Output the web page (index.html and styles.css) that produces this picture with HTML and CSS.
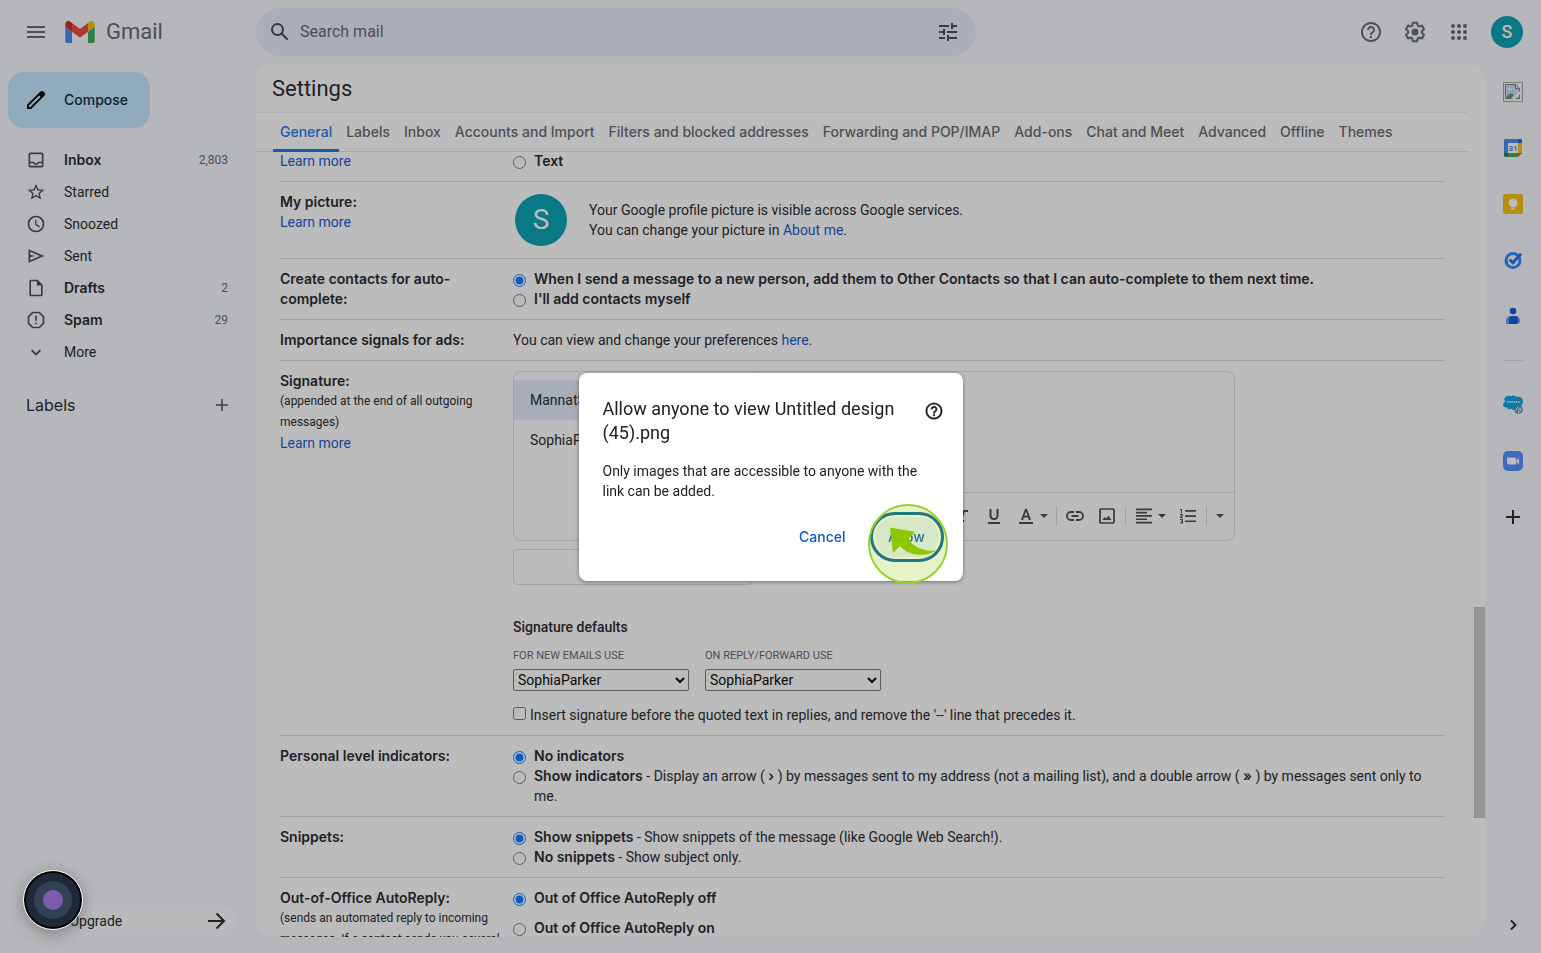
FILE: index.html
```html
<!DOCTYPE html>
<html lang="en">
<head>
<meta charset="utf-8">
<title>Settings - Gmail</title>
<link rel="stylesheet" href="styles.css">
</head>
<body>
<div class="app">
  <header class="topbar">
    <div class="brand">
      <button class="icon-btn" aria-label="Main menu"><svg viewBox="0 0 24 24" width="24" height="24"><path d="M3 18h18v-2H3v2zm0-5h18v-2H3v2zm0-7v2h18V6H3z"/></svg></button>
      <svg class="logo" viewBox="52 42 88 66" width="30" height="22"><path fill="#4285f4" d="M58 108h14V74L52 59v43c0 3.320 2.690 6 6 6"/><path fill="#34a853" d="M120 108h14c3.320 0 6-2.690 6-6V59l-20 15"/><path fill="#fbbc04" d="M120 48v26l20-15v-8c0-7.420-8.470-11.650-14.400-7.200"/><path fill="#ea4335" d="M72 74V48l24 18 24-18v26L96 92"/><path fill="#c5221f" d="M52 51v8l20 15V48l-5.600-4.200c-5.940-4.450-14.400-.22-14.400 7.200"/></svg>
      <span class="brand-name">Gmail</span>
    </div>
    <form class="search">
      <svg viewBox="0 0 24 24" width="24" height="24"><path d="M20.490 19l-5.730-5.730C15.530 12.200 16 10.910 16 9.500A6.500 6.500 0 1 0 9.500 16c1.410 0 2.700-.47 3.770-1.240L19 20.490 20.490 19zM5 9.500C5 7.010 7.010 5 9.500 5S14 7.010 14 9.500 11.990 14 9.500 14 5 11.990 5 9.500z"/></svg>
      <input type="text" placeholder="Search mail" aria-label="Search mail">
      <button type="button" class="icon-btn" aria-label="Search options"><svg viewBox="0 0 24 24" width="24" height="24"><path d="M3 17v2h6v-2H3zM3 5v2h10V5H3zm10 16v-2h8v-2h-8v-2h-2v6h2zM7 9v2H3v2h4v2h2V9H7zm14 4v-2H11v2h10zm-6-4h2V7h4V5h-4V3h-2v6z"/></svg></button>
    </form>
    <div class="top-actions">
      <button class="icon-btn" aria-label="Support"><svg viewBox="0 0 24 24" width="24" height="24"><path d="M11 18h2v-2h-2v2zm1-16C6.480 2 2 6.480 2 12s4.480 10 10 10 10-4.480 10-10S17.520 2 12 2zm0 18c-4.410 0-8-3.590-8-8s3.590-8 8-8 8 3.590 8 8-3.590 8-8 8zm0-14c-2.210 0-4 1.790-4 4h2c0-1.100.9-2 2-2s2 .9 2 2c0 2-3 1.750-3 5h2c0-2.250 3-2.500 3-5 0-2.210-1.790-4-4-4z"/></svg></button>
      <button class="icon-btn" aria-label="Settings"><svg viewBox="0 0 24 24" width="24" height="24"><path d="M13.850 22.250h-3.700c-.74 0-1.360-.54-1.450-1.270l-.27-1.890c-.27-.14-.53-.29-.79-.46l-1.800.72c-.7.26-1.470-.03-1.810-.65L2.200 15.530c-.35-.66-.2-1.440.36-1.880l1.530-1.190c-.01-.15-.02-.3-.02-.46 0-.15.010-.31.020-.46l-1.520-1.190c-.59-.45-.74-1.260-.37-1.880l1.850-3.190c.34-.62 1.110-.9 1.790-.63l1.810.73c.26-.17.52-.32.780-.46l.27-1.910c.09-.7.710-1.250 1.440-1.250h3.700c.74 0 1.360.54 1.450 1.270l.27 1.890c.27.14.53.29.79.46l1.800-.72c.71-.26 1.480.03 1.820.65l1.840 3.180c.36.66.2 1.440-.36 1.880l-1.520 1.190c.01.15.020.3.020.460s-.01.31-.02.46l1.520 1.190c.56.45.72 1.230.37 1.860l-1.860 3.220c-.34.62-1.110.9-1.800.63l-1.800-.72c-.26.17-.52.32-.78.460l-.27 1.910c-.1.680-.72 1.220-1.460 1.220zm-3.230-2h2.760l.37-2.550.53-.22c.44-.18.88-.44 1.340-.78l.45-.34 2.380.96 1.380-2.400-2.030-1.580.07-.56c.03-.26.060-.51.060-.78s-.03-.53-.06-.78l-.07-.56 2.030-1.580-1.390-2.400-2.390.96-.45-.35c-.42-.32-.87-.58-1.330-.77l-.52-.22-.37-2.550h-2.760l-.37 2.550-.53.210c-.44.190-.88.440-1.340.79l-.45.330-2.380-.95-1.390 2.390 2.030 1.580-.07.56a7 7 0 0 0-.06.79c0 .26.020.53.060.78l.07.56-2.030 1.580 1.380 2.400 2.390-.96.45.35c.43.33.86.58 1.330.77l.53.220z"/><circle cx="12" cy="12" r="3.500"/></svg></button>
      <button class="icon-btn" aria-label="Google apps"><svg viewBox="0 0 24 24" width="24" height="24"><path d="M6 8a2 2 0 1 0 0-4 2 2 0 0 0 0 4zm6 12a2 2 0 1 0 0-4 2 2 0 0 0 0 4zm-6 0a2 2 0 1 0 0-4 2 2 0 0 0 0 4zm0-6a2 2 0 1 0 0-4 2 2 0 0 0 0 4zm6 0a2 2 0 1 0 0-4 2 2 0 0 0 0 4zm6-6a2 2 0 1 0 0-4 2 2 0 0 0 0 4zm-6 0a2 2 0 1 0 0-4 2 2 0 0 0 0 4zm6 6a2 2 0 1 0 0-4 2 2 0 0 0 0 4zm0 6a2 2 0 1 0 0-4 2 2 0 0 0 0 4z"/></svg></button>
      <button class="avatar avatar-small" aria-label="Account">S</button>
    </div>
  </header>

  <aside class="sidebar">
    <button class="compose"><svg viewBox="0 0 24 24" width="24" height="24"><path fill-rule="evenodd" d="M3 21v-4.200L15.900 3.900c1.200-1.200 3-1.200 4.200 0s1.200 3 0 4.200L7.200 21H3zm2-2h1.400L16.500 8.900l-1.400-1.400L5 17.600V19z"/></svg>Compose</button>
    <nav class="nav">
      <a class="nav-item strong" href="#"><svg viewBox="0 0 24 24" width="20" height="20"><path d="M19 3H5a2 2 0 0 0-2 2v14a2 2 0 0 0 2 2h14a2 2 0 0 0 2-2V5a2 2 0 0 0-2-2zm0 16H5v-3h3.560c.69 1.190 1.970 2 3.450 2s2.750-.81 3.450-2H19v3zm0-5h-4.990c0 1.100-.9 2-2 2s-2-.9-2-2H5V5h14v9z"/></svg><span>Inbox</span><span class="count">2,803</span></a>
      <a class="nav-item" href="#"><svg viewBox="0 0 24 24" width="20" height="20"><path d="M22 9.240l-7.190-.62L12 2 9.190 8.630 2 9.240l5.460 4.730L5.820 21 12 17.270 18.180 21l-1.630-7.030L22 9.240zM12 15.400l-3.760 2.270 1-4.280-3.320-2.880 4.380-.38L12 6.100l1.710 4.040 4.380.38-3.320 2.880 1 4.280L12 15.400z"/></svg><span>Starred</span></a>
      <a class="nav-item" href="#"><svg viewBox="0 0 24 24" width="20" height="20"><path d="M12 2a10 10 0 1 0 0 20 10 10 0 0 0 0-20zm0 18a8 8 0 1 1 0-16 8 8 0 0 1 0 16zm.5-13H11v6l4.800 3.200 1-1.600-4.300-2.600V7z"/></svg><span>Snoozed</span></a>
      <a class="nav-item" href="#"><svg viewBox="0 0 24 24" width="20" height="20"><path d="M3 20V4l19 8-19 8zm2-3l11.850-5L5 7v3.500l6 1.500-6 1.500V17z"/></svg><span>Sent</span></a>
      <a class="nav-item strong" href="#"><svg viewBox="0 0 24 24" width="20" height="20"><path d="M14 2H6a2 2 0 0 0-2 2v16c0 1.100.89 2 1.990 2H18a2 2 0 0 0 2-2V8l-6-6zM6 20V4h7v5h5v11H6z"/></svg><span>Drafts</span><span class="count">2</span></a>
      <a class="nav-item strong" href="#"><svg viewBox="0 0 24 24" width="20" height="20"><path d="M8 3h8l5 5v8l-5 5H8l-5-5V8l5-5z" fill="none" stroke="currentColor" stroke-width="2" stroke-linejoin="round"/><path d="M11 7h2v6h-2zM11 15h2v2h-2z"/></svg><span>Spam</span><span class="count">29</span></a>
      <a class="nav-item" href="#"><svg viewBox="0 0 24 24" width="20" height="20"><path d="M12 16.400l-6-6L7.400 9l4.600 4.600L16.600 9l1.400 1.400z"/></svg><span>More</span></a>
    </nav>
    <div class="labels-head"><h2>Labels</h2><button class="icon-btn" aria-label="Create new label"><svg viewBox="0 0 20 20" width="20" height="20"><path d="M16 9.250v1.500h-5.250V16h-1.500v-5.250H4v-1.500h5.250V4h1.500v5.250z"/></svg></button></div>
    <a class="upgrade" href="#"><span>Upgrade</span><svg viewBox="0 0 24 24" width="24" height="24"><path d="M4 12h15M12.500 4.500L20 12l-7.500 7.500" fill="none" stroke="currentColor" stroke-width="2"/></svg></a>
  </aside>

  <main class="panel">
    <h1 class="title">Settings</h1>
    <nav class="tabs">
      <a class="tab active" href="#">General</a><a class="tab" href="#">Labels</a><a class="tab" href="#">Inbox</a><a class="tab" href="#">Accounts and Import</a><a class="tab" href="#">Filters and blocked addresses</a><a class="tab" href="#">Forwarding and POP/IMAP</a><a class="tab" href="#">Add-ons</a><a class="tab" href="#">Chat and Meet</a><a class="tab" href="#">Advanced</a><a class="tab" href="#">Offline</a><a class="tab" href="#">Themes</a>
    </nav>
    <div class="scroll">
      <section class="row row-first">
        <div class="name"><a href="#">Learn more</a></div>
        <div class="value"><label class="opt"><input type="radio" name="buttons"><b>Text</b></label></div>
      </section>
      <section class="row">
        <div class="name"><b>My picture:</b><a href="#">Learn more</a></div>
        <div class="value picture"><span class="avatar avatar-large">S</span><p>Your Google profile picture is visible across Google services.<br>You can change your picture in <a href="#">About me</a>.</p></div>
      </section>
      <section class="row">
        <div class="name"><b>Create contacts for auto-complete:</b></div>
        <div class="value">
          <label class="opt"><input type="radio" name="contacts" checked><b>When I send a message to a new person, add them to Other Contacts so that I can auto-complete to them next time.</b></label>
          <label class="opt"><input type="radio" name="contacts"><b>I'll add contacts myself</b></label>
        </div>
      </section>
      <section class="row">
        <div class="name"><b>Importance signals for ads:</b></div>
        <div class="value">You can view and change your preferences <a href="#">here</a>.</div>
      </section>
      <section class="row">
        <div class="name"><b>Signature:</b><small>(appended at the end of all outgoing messages)</small><a href="#">Learn more</a></div>
        <div class="value">
          <div class="editor">
            <div class="sig-list"><button class="sig selected">MannatS</button><button class="sig">SophiaParker</button></div>
            <div class="sig-body">
              <div class="toolbar">
                <button aria-label="Italic"><svg viewBox="0 0 20 20" width="20" height="20"><path d="M8 4v2h2.600l-2.800 8H5v2h7v-2h-2l2.800-8H16V4z"/></svg></button>
                <button aria-label="Underline"><svg viewBox="0 0 20 20" width="20" height="20"><path d="M10 14c2.800 0 4.500-1.800 4.500-4.500V3h-2v6.500c0 1.500-1 2.600-2.500 2.600s-2.500-1.100-2.500-2.600V3h-2v6.500C5.500 12.200 7.200 14 10 14zM4 16v2h12v-2z"/></svg></button>
                <button class="wide" aria-label="Text colour"><svg viewBox="0 0 20 20" width="20" height="20"><path fill-rule="evenodd" d="M9 3L5 14h2l.9-2.500h4.200L13 14h2L11 3H9zm-.5 6.800L10 5.500l1.500 4.300h-3zM3 16h14v2H3z"/></svg><svg viewBox="0 0 10 10" width="10" height="10"><path d="M1 3h8L5 7z"/></svg></button>
                <i></i>
                <button aria-label="Link"><svg viewBox="0 0 20 20" width="20" height="20"><path d="M9 6H6a4 4 0 0 0 0 8h3M11 6h3a4 4 0 0 1 0 8h-3M6.500 10h7" fill="none" stroke="currentColor" stroke-width="1.800"/></svg></button>
                <button aria-label="Insert image"><svg viewBox="0 0 20 20" width="20" height="20"><rect x="3" y="3" width="14" height="14" rx="1" fill="none" stroke="currentColor" stroke-width="1.700"/><path d="M5.500 14l2.200-3 1.500 1.800 2.200-3 3.100 4.200z"/></svg></button>
                <i></i>
                <button class="wide" aria-label="Align"><svg viewBox="0 0 20 20" width="20" height="20"><path d="M2 2.500h16v1.700H2zm0 3.300h11v1.700H2zm0 3.300h16v1.700H2zm0 3.300h11v1.700H2zm0 3.300h16v1.700H2z"/></svg><svg viewBox="0 0 10 10" width="10" height="10"><path d="M1 3h8L5 7z"/></svg></button>
                <button aria-label="Numbered list"><svg viewBox="0 0 20 20" width="20" height="20"><path d="M7 4h11v1.700H7zm0 5.200h11v1.700H7zm0 5.200h11v1.700H7zM2 3h2v4H3V4H2zM2 8h3v1.200L3.500 11H5v1H2v-1l1.800-2H2zM2 13h3v4.500H2v-1h2v-.8H3v-1h1V14H2z"/></svg></button>
                <i></i>
                <button class="slim" aria-label="More"><svg viewBox="0 0 10 10" width="10" height="10"><path d="M1 3h8L5 7z"/></svg></button>
              </div>
            </div>
          </div>
          <input class="new-sig" type="text" aria-label="Signature name">
          <h3>Signature defaults</h3>
          <div class="defaults">
            <label>FOR NEW EMAILS USE<select><option>SophiaParker</option></select></label>
            <label>ON REPLY/FORWARD USE<select><option>SophiaParker</option></select></label>
          </div>
          <label class="check"><input type="checkbox"><span>Insert signature before the quoted text in replies, and remove the '--' line that precedes it.</span></label>
        </div>
      </section>
      <section class="row">
        <div class="name"><b>Personal level indicators:</b></div>
        <div class="value">
          <label class="opt"><input type="radio" name="indicators" checked><b>No indicators</b></label>
          <label class="opt"><input type="radio" name="indicators"><span><b>Show indicators</b> - Display an arrow ( <b>›</b> ) by messages sent to my address (not a mailing list), and a double arrow ( <b>»</b> ) by messages sent only to me.</span></label>
        </div>
      </section>
      <section class="row">
        <div class="name"><b>Snippets:</b></div>
        <div class="value">
          <label class="opt"><input type="radio" name="snippets" checked><span><b>Show snippets</b> - Show snippets of the message (like Google Web Search!).</span></label>
          <label class="opt"><input type="radio" name="snippets"><span><b>No snippets</b> - Show subject only.</span></label>
        </div>
      </section>
      <section class="row">
        <div class="name"><b>Out-of-Office AutoReply:</b><small>(sends an automated reply to incoming messages. If a contact sends you several</small></div>
        <div class="value spaced">
          <label class="opt"><input type="radio" name="ooo" checked><b>Out of Office AutoReply off</b></label>
          <label class="opt"><input type="radio" name="ooo"><b>Out of Office AutoReply on</b></label>
        </div>
      </section>
    </div>
    <div class="thumb"></div>
  </main>

  <aside class="rail">
    <a href="#" aria-label="Add-on"><svg viewBox="0 0 20 20" width="20" height="20"><path fill="none" stroke="#a3a3a3" d="M.5.500h19v19H.5z"/><path fill="#c6d9f5" stroke="#7c7c7c" d="M2.500 2.500h10l4 4v10h-14z"/><path fill="#fff" d="M4 8c0-2 2-2 2.500-1C8 5.500 9 7 9 8z"/><path fill="#48a537" d="M3 16c2-4 5-6 8-3l-3 3z"/><path fill="#fff" stroke="#7c7c7c" d="M12.500 2.500v4h4z"/><path fill="#fff" d="M9 17l8-8v3l-5 5z"/></svg></a>
    <a href="#" aria-label="Calendar"><svg viewBox="0 0 20 20" width="20" height="20"><path fill="#4285f4" d="M2 1h13v4H5v10H1V2z"/><path fill="#1967d2" d="M15 1h3l1 1v3h-4z"/><path fill="#fff" d="M5 5h10v10H5z"/><path fill="#fbbc04" d="M15 5h4v10h-4z"/><path fill="#188038" d="M1 15h4v4H2l-1-1z"/><path fill="#34a853" d="M5 15h10v4H5z"/><path fill="#ea4335" d="M15 15h4l-4 4z"/><text x="10" y="13" text-anchor="middle" class="cal">31</text></svg></a>
    <a href="#" aria-label="Keep"><svg viewBox="0 0 20 20" width="20" height="20"><rect x="0" y="0" width="20" height="20" rx="2" fill="#fbbc04"/><path fill="#fff" d="M10 4.500a4.300 4.300 0 0 0-2.200 8v.8h4.400v-.8a4.300 4.300 0 0 0-2.200-8zM8 14.200h4v1.300H8z"/></svg></a>
    <a href="#" aria-label="Tasks"><svg viewBox="0 0 20 20" width="20" height="20"><circle cx="10" cy="10.500" r="7" fill="none" stroke="#2684fc" stroke-width="3"/><path d="M6.500 9.500l3.500 3.300L18 3.800" fill="none" stroke="#1a6fe0" stroke-width="3"/></svg></a>
    <a href="#" aria-label="Contacts"><svg viewBox="0 0 20 20" width="20" height="20"><circle cx="10" cy="5" r="3.300" fill="#0b57d0"/><path fill="#6c93f5" d="M3 18v-3.500A4.500 4.500 0 0 1 7.500 10h5a4.500 4.500 0 0 1 4.500 4.500c0 2-1 3.500-3 3.500z"/><path fill="#0b57d0" d="M6 18v-4a4 4 0 0 1 4-4h2a3 3 0 0 1 3 3v2a3 3 0 0 1-3 3z"/></svg></a>
    <hr>
    <a href="#" aria-label="Salesforce"><svg viewBox="0 0 20 20" width="20" height="20"><path fill="#f6f7f8" d="M0 0h20v19H0z"/><path fill="#00a1e0" d="M2.500 7C-1 3 4-1 8 1.500c2-2 4.500-1 5.500.5 3-1 6 .5 6.500 4 0 3-1.500 5-3.500 5.500L12 15c-2 0-2.500-.5-3.500-1.500-2 1.500-4 .5-4.500-1-2 .5-4-1-4-2.500s1-2.500 2.500-3z"/><path d="M4 7h13" stroke="#fff" stroke-width="2" stroke-dasharray="1.500 .7" opacity=".7"/><circle cx="15.500" cy="14.500" r="4.300" fill="#3a88bd"/><path d="M12.500 16l2.500-4.500M15 17.500c2-.5 3-2 3-3.500 0-1.500-2-1.500-2 0l-.5 3.500" fill="none" stroke="#fff"/></svg></a>
    <a href="#" aria-label="Zoom"><svg viewBox="0 0 20 20" width="20" height="20"><rect width="20" height="20" rx="5" fill="#4a8cff"/><path fill="#fff" d="M4 6.500h7a2 2 0 0 1 2 2v5H6a2 2 0 0 1-2-2zM13.500 9.200L16 7v6.500l-2.500-2z"/></svg></a>
    <a href="#" aria-label="Get add-ons"><svg viewBox="0 0 20 20" width="20" height="20"><path d="M10 3v14M3 10h14" stroke="currentColor" stroke-width="2"/></svg></a>
    <button class="icon-btn rail-toggle" aria-label="Hide side panel"><svg viewBox="0 0 20 20" width="20" height="20"><path d="M8 5.500l4.500 4.500L8 14.500" fill="none" stroke="currentColor" stroke-width="1.800"/></svg></button>
  </aside>
</div>

<div class="scrim">
  <div class="dialog" role="dialog" aria-labelledby="dialog-title">
    <div class="dialog-head">
      <h2 id="dialog-title">Allow anyone to view Untitled design (45).png</h2>
      <button class="icon-btn" aria-label="Help"><svg viewBox="0 0 24 24" width="20" height="20"><path stroke="currentColor" stroke-width=".3" d="M11 18h2v-2h-2v2zm1-16C6.480 2 2 6.480 2 12s4.480 10 10 10 10-4.480 10-10S17.520 2 12 2zm0 18c-4.410 0-8-3.590-8-8s3.590-8 8-8 8 3.590 8 8-3.590 8-8 8zm0-14c-2.210 0-4 1.790-4 4h2c0-1.100.9-2 2-2s2 .9 2 2c0 2-3 1.750-3 5h2c0-2.250 3-2.500 3-5 0-2.210-1.790-4-4-4z"/></svg></button>
    </div>
    <p>Only images that are accessible to anyone with the link can be added.</p>
    <div class="dialog-actions">
      <button class="text-btn">Cancel</button>
      <button class="text-btn focused">Allow</button>
      <svg class="pointer" viewBox="0 0 80 80" width="80" height="80"><circle cx="40" cy="40" r="39" fill="#8cc800" fill-opacity=".22" stroke="#96d22d" stroke-width="2"/><path fill="#8cc800" d="M22 23.500L47 28l-6.500 7c5 8 13 12.500 27.500 11.500-7 5.500-26 7.500-36-4.500L25 49z"/></svg>
    </div>
  </div>
</div>
<button class="recorder" aria-label="Recorder"><span></span></button>
</body>
</html>
```
FILE: styles.css
```css
* { box-sizing: border-box; }
body {
  margin: 0;
  font: 14px/20px Roboto, "Liberation Sans", sans-serif;
  color: #202124;
}
h1, h2, h3, p { margin: 0; font-weight: 400; }
a { color: #1155cc; text-decoration: none; }
button { font: inherit; color: inherit; border: 0; padding: 0; background: none; }
svg { display: block; fill: currentColor; flex: none; }
b, .strong { font-family: Inter, Roboto, sans-serif; font-weight: 600; }

.app {
  height: 100vh;
  display: grid;
  grid-template: 64px minmax(0, 1fr) / 256px minmax(0, 1fr) 56px;
  background: #f6f8fc;
  padding-bottom: 16px;
}

.topbar { grid-column: 1 / -1; display: flex; align-items: center; color: #444746; }
.brand { width: 256px; padding-left: 24px; display: flex; align-items: center; color: #5f6368; }
.logo { margin: 0 11px 0 17px; }
.brand-name { font-size: 22px; line-height: 32px; }
.search {
  width: 720px; height: 48px; border-radius: 24px; background: #e8ebf6;
  display: flex; align-items: center; gap: 8px; padding: 0 16px 0 12px;
}
.search input { flex: 1; border: 0; padding: 0; background: none; font: inherit; font-size: 16px; outline: 0; }
.search input::placeholder { color: #5f6368; opacity: 1; }
.top-actions { margin-left: auto; padding-right: 18px; display: flex; align-items: center; gap: 20px; color: #5f6368; }
.avatar { border-radius: 50%; background: #00a0b0; color: #fff; display: grid; place-items: center; flex: none; }
.avatar-small { width: 32px; height: 32px; font-size: 18px; font-weight: 500; }
.avatar-large { width: 52px; height: 52px; font-size: 28px; }

.sidebar { display: flex; flex-direction: column; padding-top: 8px; min-height: 0; }
.compose {
  align-self: flex-start; margin: 0 0 16px 8px; height: 56px; border-radius: 16px;
  padding: 0 22px 0 16px; display: flex; align-items: center; gap: 16px;
  background: #c2e7ff; color: #001d35; font-family: Inter, sans-serif; font-weight: 500;
}
.compose svg { color: #000; }
.nav-item { height: 32px; padding: 0 28px 0 26px; display: flex; align-items: center; gap: 18px; color: #202124; }
.nav-item svg { color: #444746; }
.count { margin-left: auto; font: 400 12px/20px Roboto, sans-serif; color: #5f6368; }
.labels-head { margin-top: 25px; padding: 0 24px 0 26px; display: flex; justify-content: space-between; align-items: center; }
.labels-head h2 { font: 400 16px/24px Inter, sans-serif; }
.labels-head svg { color: #444746; }
.upgrade {
  margin: auto 21px 0 20px; height: 32px; border-radius: 16px; padding: 0 7px 0 50px;
  background: #fcfdfe; color: #202124; display: flex; align-items: center; justify-content: space-between;
}

.panel { background: #fff; border-radius: 16px; overflow: hidden; display: flex; flex-direction: column; position: relative; min-height: 0; }
.title { height: 49px; padding: 9px 16px 7px; margin-right: 18px; font-size: 22px; line-height: 32px; border-bottom: 1px solid #e8eaed; }
.tabs { height: 38px; padding-left: 17px; margin-right: 16px; display: flex; box-shadow: 0 1px #e3e5e8; position: relative; flex: none; }
.tab { padding: 9px 7px; color: #5f6368; font-family: Inter, sans-serif; font-weight: 500; white-space: nowrap; }
.tab.active { color: #1a73e8; box-shadow: inset 0 -2px #1a73e8, 0 1px #1a73e8; }
.scroll { flex: 1; min-height: 0; overflow: hidden; padding: 0 40px 0 24px; }
.row { display: grid; grid-template-columns: 233px minmax(0, 1fr); padding: 10px 0; border-bottom: 1px solid #dadce0; }
.row-first { padding-top: 0; }
.name { padding-right: 20px; }
.name b, .name a, .name small { display: block; }
.name small { font-size: 12px; line-height: 21px; margin-right: -10px; }
.value { padding-right: 8px; }
.picture { display: flex; align-items: center; gap: 22px; padding: 0 2px; min-height: 56px; }
.opt { display: flex; }
.opt input { width: 13px; height: 13px; margin: 5px 8px 0 0; flex: none; }
.spaced { display: grid; gap: 10px; align-content: start; }
.editor { width: 722px; max-width: 100%; height: 170px; border: 1px solid #dadce0; border-radius: 8px; display: flex; overflow: hidden; }
.sig-list { width: 241px; border-right: 1px solid #dadce0; padding-top: 8px; }
.sig { display: block; width: 100%; height: 40px; padding: 0 16px; text-align: left; }
.sig.selected { background: #e2ebf8; }
.sig-body { flex: 1; display: flex; flex-direction: column; justify-content: flex-end; }
.toolbar { height: 48px; border-top: 1px solid #dadce0; display: flex; align-items: center; justify-content: flex-end; color: #444746; padding: 0 3px 2px 0; }
.toolbar button { width: 32px; display: flex; justify-content: center; align-items: center; }
.toolbar .wide { width: 44px; gap: 3px; }
.toolbar .slim { width: 22px; }
.toolbar i { width: 1px; height: 20px; background: #dadce0; margin: 0 2px; }
.new-sig { display: block; width: 240px; height: 36px; margin-top: 8px; border: 1px solid #dadce0; border-radius: 4px; background: #fff; }
h3 { font-size: 14px; line-height: 20px; font-weight: 500; margin-top: 32px; }
.defaults { display: flex; gap: 16px; margin-top: 9px; font-size: 11px; color: #5f6368; }
.defaults select { display: block; width: 176px; height: 22px; margin-top: 3px; background: #fff; border: 1px solid #767676; border-radius: 2px; font: inherit; font-size: 14px; line-height: 20px; color: #000; padding: 0; }
.check { display: flex; margin-top: 14px; }
.check input { width: 13px; height: 13px; margin: 2px 4px 0 0; }
.thumb { position: absolute; right: 0; top: 543px; width: 11px; height: 211px; background: #cbcbcb; border: 1px solid #bdbdbd; }

.rail { display: flex; flex-direction: column; color: #202124; }
.rail a { height: 56px; display: grid; place-items: center; color: inherit; }
.rail hr { width: 20px; height: 1px; margin: 16px auto; border: 0; background: #dadce0; }
.rail-toggle { margin: auto auto 2px; }
.cal { font: 700 8px Roboto, sans-serif; fill: #4285f4; }

.scrim { position: fixed; inset: 0; background: rgba(32, 33, 36, .3); display: grid; place-items: center; }
.dialog { width: 384px; background: #fff; border-radius: 8px; padding: 24px 19px 19px 24px; box-shadow: 0 1px 4px rgba(0, 0, 0, .4); }
.dialog-head { display: flex; gap: 20px; align-items: flex-start; }
.dialog-head h2 { flex: 1; font-size: 18px; line-height: 24px; }
.dialog-head .icon-btn { margin-top: 4px; }
.dialog p { margin: 16px 10px 0 0; }
.dialog-actions { margin-top: 11px; display: flex; justify-content: flex-end; gap: 16px; position: relative; }
.text-btn { height: 50px; padding: 0 8px; color: #0b57d0; font-family: Inter, sans-serif; font-weight: 500; }
.focused { width: 74px; border-radius: 25px; border: 3px solid #0061a4; background: #eef1ff; box-shadow: inset 0 0 0 2px #fff; }
.pointer { position: absolute; right: -4px; top: -8px; }
.recorder { position: fixed; left: 23px; bottom: 23px; width: 60px; height: 60px; border-radius: 50%; background: #334155; border: 1px solid #fff; box-shadow: inset 0 0 0 2px #000, inset 0 0 0 10px #1e293b, 0 4px 16px rgba(0, 0, 0, .3); display: grid; place-items: center; }
.recorder span { width: 20px; height: 20px; border-radius: 50%; background: #7c5cb0; }
```
